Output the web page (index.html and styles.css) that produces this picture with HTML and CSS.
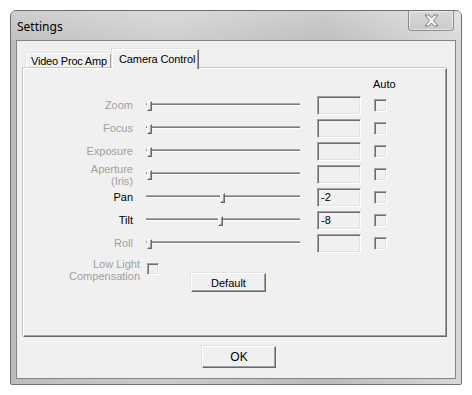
FILE: index.html
```html
<!DOCTYPE html>
<html lang="en">
<head>
  <meta charset="UTF-8">
  <title>Settings</title>
  <link rel="stylesheet" href="styles.css">
</head>
<body>
  <div class="window">
    <div class="titlebar">
      <span class="title">Settings</span>
      <div class="close">
        <svg width="15" height="13" viewBox="0 0 15 13">
          <polygon points="1,1 5,1 7.5,4 10,1 14,1 9.5,6.5 14,12 10,12 7.5,9 5,12 1,12 5.5,6.5" fill="#f6f6f6" stroke="#7c7c7c" stroke-width="1" stroke-linejoin="round"/>
        </svg>
      </div>
    </div>

    <div class="client">
      <div class="tabs">
        <div class="tab">Video Proc Amp</div>
        <div class="tab active">Camera Control</div>
      </div>

      <div class="panel">
        <div class="auto-head">Auto</div>

        <div class="row disabled">
          <div class="label">Zoom</div>
          <div class="slider"><div class="track"></div><div class="thumb" style="left: 1px"></div></div>
          <div class="edit"></div>
          <div class="check"></div>
        </div>
        <div class="row disabled">
          <div class="label">Focus</div>
          <div class="slider"><div class="track"></div><div class="thumb" style="left: 1px"></div></div>
          <div class="edit"></div>
          <div class="check"></div>
        </div>
        <div class="row disabled">
          <div class="label">Exposure</div>
          <div class="slider"><div class="track"></div><div class="thumb" style="left: 1px"></div></div>
          <div class="edit"></div>
          <div class="check"></div>
        </div>
        <div class="row disabled">
          <div class="label two-line">Aperture<br>(Iris)</div>
          <div class="slider"><div class="track"></div><div class="thumb" style="left: 1px"></div></div>
          <div class="edit"></div>
          <div class="check"></div>
        </div>
        <div class="row">
          <div class="label">Pan</div>
          <div class="slider"><div class="track"></div><div class="thumb" style="left: 74px"></div></div>
          <div class="edit">-2</div>
          <div class="check"></div>
        </div>
        <div class="row">
          <div class="label">Tilt</div>
          <div class="slider"><div class="track"></div><div class="thumb" style="left: 72px"></div></div>
          <div class="edit">-8</div>
          <div class="check"></div>
        </div>
        <div class="row disabled">
          <div class="label">Roll</div>
          <div class="slider"><div class="track"></div><div class="thumb" style="left: 1px"></div></div>
          <div class="edit"></div>
          <div class="check"></div>
        </div>

        <div class="lowlight disabled">
          <div class="label two-line">Low Light<br>Compensation</div>
          <div class="check"></div>
          <button class="btn default-btn">Default</button>
        </div>
      </div>

      <div class="footer">
        <button class="btn ok-btn">OK</button>
      </div>
    </div>
  </div>
</body>
</html>
```

FILE: styles.css
```css
body {
  margin: 0;
  padding: 10px 0 0 10px;
  background: #ffffff;
  font-family: "Liberation Sans", Arial, sans-serif;
  font-size: 11px;
  color: #000;
}

.window {
  width: 452px;
  height: 375px;
  box-sizing: border-box;
  border: 1px solid #6f6f6f;
  border-radius: 6px 6px 2px 2px;
  background: linear-gradient(to right, #bcbcbc, #cbcbcb 35%, #bababa 70%, #d8d8d8);
  padding: 0 5px 5px 5px;
}

.titlebar {
  height: 29px;
  display: flex;
  align-items: center;
  justify-content: space-between;
  background: linear-gradient(to bottom, rgba(255,255,255,0.28), rgba(255,255,255,0.08));
  margin: 0 -5px;
  padding: 0 7px 0 6px;
}

.title {
  font-family: "Noto Sans", sans-serif;
  font-size: 12px;
  color: #000;
  padding-top: 1px;
}

.close {
  align-self: flex-start;
  width: 46px;
  height: 20px;
  box-sizing: border-box;
  border: 1px solid #8c8c8c;
  border-top: none;
  border-radius: 0 0 4px 4px;
  background: linear-gradient(to bottom, #d8d8d8, #cacaca);
  box-shadow: inset 0 0 0 1px rgba(255,255,255,0.5);
  display: flex;
  align-items: center;
  justify-content: center;
}

.close svg {
  display: block;
}

.client {
  height: 339px;
  box-sizing: border-box;
  border: 1px solid #858585;
  background: #f0f0f0;
  padding: 8px 8px 0 6px;
}

.tabs {
  display: flex;
  align-items: flex-end;
  height: 19px;
  padding-left: 3px;
  position: relative;
  z-index: 1;
}

.tab {
  height: 15px;
  width: 86px;
  box-sizing: border-box;
  padding: 1px 0 0 4px;
  border-left: 1px solid #ffffff;
  border-top: 1px solid #ffffff;
  border-right: 1px solid #696969;
  box-shadow: inset -1px 0 0 #a0a0a0, -1px -1px 0 #e3e3e3;
  letter-spacing: -0.2px;
  white-space: nowrap;
}

.tab.active {
  height: 20px;
  width: 87px;
  margin-bottom: -1px;
  padding-top: 3px;
  padding-left: 6px;
  letter-spacing: -0.1px;
  background: #f0f0f0;
}

.panel {
  height: 269px;
  box-sizing: border-box;
  border-left: 1px solid #ffffff;
  border-top: 1px solid #ffffff;
  border-right: 1px solid #696969;
  border-bottom: 1px solid #696969;
  box-shadow: -1px -1px 0 #c8c8c8, inset -1px -1px 0 #a0a0a0;
}

.auto-head {
  height: 25px;
  box-sizing: border-box;
  padding-top: 8px;
  padding-left: 349px;
  line-height: 14px;
}

.row {
  display: flex;
  align-items: center;
  height: 23px;
}

.label {
  width: 109px;
  text-align: right;
  line-height: 13px;
  flex-shrink: 0;
}

.two-line {
  line-height: 12px;
}

.disabled .label {
  color: #a0a0a0;
}

.slider {
  position: relative;
  width: 154px;
  height: 19px;
  margin-left: 13px;
}

.track {
  position: absolute;
  left: 0;
  right: 0;
  top: 7px;
  height: 1px;
  background: #7c7c7c;
  border-top: 1px solid #a8a8a8;
  border-bottom: 1px solid #ffffff;
}

.thumb {
  position: absolute;
  top: 5px;
  width: 5px;
  height: 10px;
  box-sizing: border-box;
  background: #f0f0f0;
  border-left: 1px solid #ffffff;
  border-top: 1px solid #ffffff;
  border-right: 1px solid #696969;
  border-bottom: 1px solid #696969;
  box-shadow: inset -1px -1px 0 #a0a0a0;
}

.edit {
  width: 44px;
  height: 19px;
  box-sizing: border-box;
  margin-left: 17px;
  border-left: 1px solid #a0a0a0;
  border-top: 1px solid #a0a0a0;
  border-right: 1px solid #ffffff;
  border-bottom: 1px solid #ffffff;
  box-shadow: inset 1px 1px 0 #6d6d6d, inset -1px -1px 0 #e3e3e3;
  padding-left: 3px;
  line-height: 17px;
}

.check {
  width: 13px;
  height: 13px;
  box-sizing: border-box;
  margin-left: 13px;
  border-left: 1px solid #a0a0a0;
  border-top: 1px solid #a0a0a0;
  border-right: 1px solid #ffffff;
  border-bottom: 1px solid #ffffff;
  box-shadow: inset 1px 1px 0 #6d6d6d, inset -1px -1px 0 #e3e3e3;
  background: #f0f0f0;
}

.lowlight {
  display: flex;
  align-items: flex-start;
  padding-top: 3px;
}

.lowlight .label {
  width: 116px;
}

.lowlight .check {
  margin-left: 7px;
  margin-top: 5px;
  width: 12px;
  height: 12px;
}

.btn {
  font-family: "Liberation Sans", Arial, sans-serif;
  font-size: 11px;
  color: #000;
  background: #f0f0f0;
  box-sizing: border-box;
  padding: 0;
  border-left: 1px solid #ffffff;
  border-top: 1px solid #ffffff;
  border-right: 1px solid #696969;
  border-bottom: 1px solid #696969;
  box-shadow: -1px -1px 0 #e3e3e3, inset -1px -1px 0 #a0a0a0;
}

.default-btn {
  width: 75px;
  height: 19px;
  margin-left: 32px;
  margin-top: 15px;
}

.footer {
  display: flex;
  justify-content: center;
  padding-top: 9px;
  padding-left: 8px;
}

.ok-btn {
  width: 74px;
  height: 22px;
  font-size: 12px;
}
```
